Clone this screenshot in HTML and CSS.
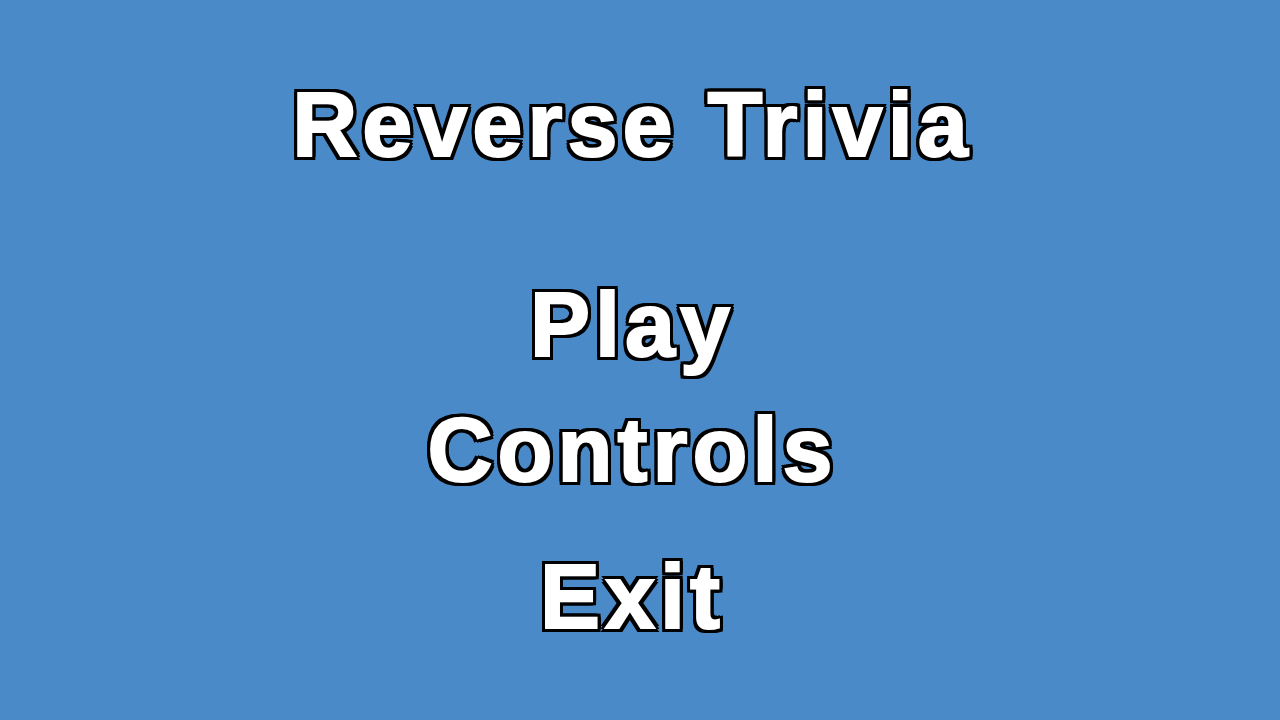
FILE: index.html
```html
<!DOCTYPE html>
<html lang="en">
  <head>
    <meta charset="UTF-8" />
    <meta name="viewport" content="width=device-width, initial-scale=1.0" />
    <title>Reverse Trivia</title>
    <link rel="stylesheet" href="styles.css">
  </head>
  <body>
    <main class="menu-screen">
      <h1 class="title">Reverse Trivia</h1>
      <nav class="menu">
        <a class="menu-item" href="#play">Play</a>
        <a class="menu-item" href="#controls">Controls</a>
        <a class="menu-item menu-exit" href="#exit">Exit</a>
      </nav>
    </main>
  </body>
</html>
```

FILE: styles.css
```css
html,
body {
  margin: 0;
  height: 100%;
}
body {
  background: #4a8ac8;
  font-family: "Liberation Sans", Arial, sans-serif;
  font-weight: bold;
  overflow: hidden;
}
.menu-screen {
  display: flex;
  flex-direction: column;
  align-items: center;
  padding-top: 80px;
}
/* heavy lettering: white stroke fattens the glyphs,
   stacked drop-shadows draw the black outline around them */
.title,
.menu-item {
  margin: 0;
  padding-right: 15px;
  font-size: 90px;
  line-height: 1;
  letter-spacing: 5px;
  color: #fff;
  -webkit-text-stroke: 2px #fff;
  text-decoration: none;
  filter: drop-shadow(3px 0 0 #000) drop-shadow(-3px 0 0 #000)
    drop-shadow(0 3px 0 #000) drop-shadow(0 -3px 0 #000);
}
.menu {
  display: flex;
  flex-direction: column;
  align-items: center;
  gap: 35px;
  margin-top: 110px;
}
.menu-exit {
  margin-top: 22px;
}
```
